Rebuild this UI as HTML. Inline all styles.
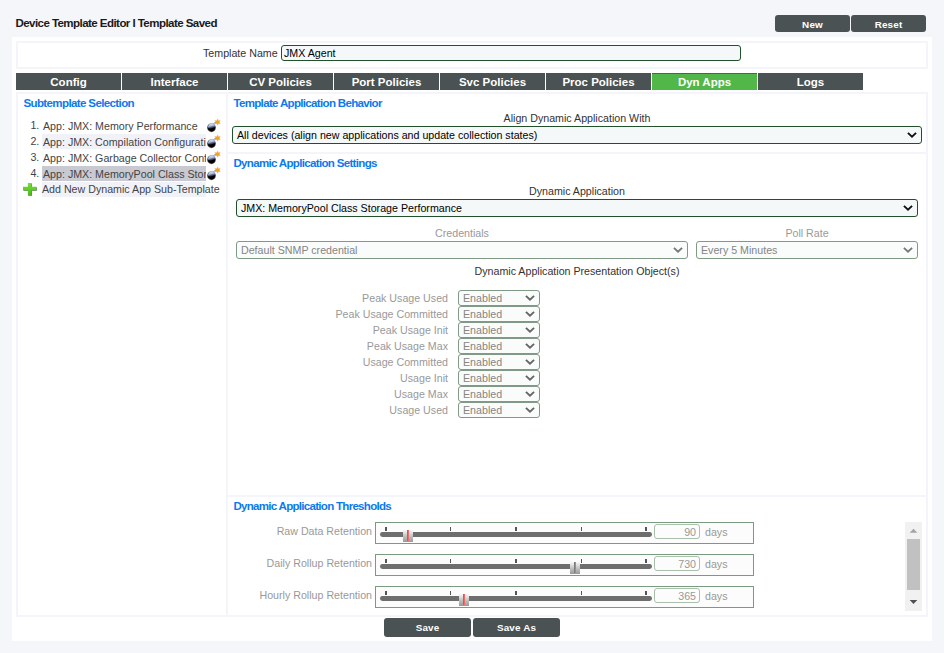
<!DOCTYPE html>
<html><head><meta charset="utf-8"><title>Device Template Editor</title>
<style>
*{box-sizing:border-box;margin:0;padding:0}
html,body{width:944px;height:653px;overflow:hidden}
body{background:#f5f6fa;font-family:"Liberation Sans",Arial,sans-serif;font-size:10.67px;color:#333;position:relative}
.abs{position:absolute}
#title{left:15.4px;top:16px;font-weight:bold;font-size:11.56px;letter-spacing:-0.565px;color:#1a1a1a;white-space:nowrap;line-height:14px}
.btn{background:#4b5253;color:#fff;font-weight:bold;font-size:9.9px;letter-spacing:0.15px;text-align:center;border-radius:3px;height:17px;line-height:20px}
#panel{left:12px;top:37px;width:920px;height:604px;background:#fff}
.box{border:2px solid #f4f5fa;background:#fff}
.tab{top:73px;height:17px;background:#4b5253;color:#fff;font-weight:bold;font-size:11.5px;text-align:center;line-height:18px}
.tab.on{background:#50b748;box-shadow:inset 0 1px 0 #5d5a5c}
.hd{color:#0b79ef;font-weight:bold;font-size:11.56px;letter-spacing:-0.63px;white-space:nowrap;line-height:14px}
.lbl{color:#333;white-space:nowrap;line-height:13px}
.c{text-align:center}
.r{text-align:right}
.g{color:#999}
.sel{border:1px solid #22502a;border-radius:3px;background:#f5f8f8;color:#000;white-space:nowrap;overflow:hidden;padding-left:4px}
.sel.dis{border-color:#809a86;color:#858585;background:#fafcfb}
.sel svg{position:absolute;right:4px}
.li{left:42px;width:164px;height:15px;line-height:17px;padding-left:1px;color:#444;white-space:nowrap;overflow:hidden}
.num{left:21.3px;width:18px;text-align:right;color:#444;line-height:14.5px}
.thr{left:375px;width:379px;height:22px;border:1px solid #7b9a80;background:#fbfcfb}
.track{left:380.3px;width:271.3px;height:4.8px;border-radius:2.4px;background:#6e6e6e}
.tk{width:2px;height:3.8px;background:#555}
.tk.l{width:1px;background:#555}
.thumb{width:10px;height:12.6px;background:linear-gradient(180deg,#ffffff 0%,#e6e6e6 25%,#bdbdbd 60%,#9a9a9a 100%)}
.thumb i{position:absolute;left:4px;top:1.2px;width:0.9px;height:10.8px;background:#7c7c7c}
.thumb b{position:absolute;left:4.8px;top:1.2px;width:1.4px;height:10.8px;background:#f56a68}
.num2{left:654px;width:46px;height:15px;border:1px solid #a9c0ac;border-radius:3px;background:#fbfcfb;color:#999;text-align:right;padding-right:3px;line-height:15px;font-size:10.67px}
</style></head><body>
<div class="abs" id="title">Device Template Editor I Template Saved</div>
<div class="abs btn" style="left:775px;top:15px;width:75px">New</div>
<div class="abs btn" style="left:851px;top:15px;width:75px">Reset</div>
<div class="abs" id="panel"></div>
<div class="abs box" style="left:16px;top:41px;width:912px;height:28px"></div>
<div class="abs lbl" style="left:203px;top:47px">Template Name</div>
<div class="abs sel" style="left:281px;top:45px;width:460px;height:16px;line-height:14px;padding-left:2px">JMX Agent</div>
<div class="abs tab" style="left:16px;width:105px">Config</div>
<div class="abs tab" style="left:122px;width:105px">Interface</div>
<div class="abs tab" style="left:228px;width:105px">CV Policies</div>
<div class="abs tab" style="left:334px;width:105px">Port Policies</div>
<div class="abs tab" style="left:440px;width:105px">Svc Policies</div>
<div class="abs tab" style="left:546px;width:105px">Proc Policies</div>
<div class="abs tab on" style="left:652px;width:105px">Dyn Apps</div>
<div class="abs tab" style="left:758px;width:105px">Logs</div>
<div class="abs box" style="left:16px;top:92px;width:212px;height:525px"></div>
<div class="abs box" style="left:226px;top:92px;width:702px;height:62px"></div>
<div class="abs box" style="left:226px;top:152px;width:702px;height:345px"></div>
<div class="abs box" style="left:226px;top:495px;width:702px;height:122px"></div>
<div class="abs hd" style="left:23.4px;top:96px">Subtemplate Selection</div>
<div class="abs hd" style="left:233.4px;top:96px;letter-spacing:-0.68px">Template Application Behavior</div>
<div class="abs hd" style="left:233.4px;top:156px;letter-spacing:-0.685px">Dynamic Application Settings</div>
<div class="abs hd" style="left:233.4px;top:499px;letter-spacing:-0.72px">Dynamic Application Thresholds</div>
<div class="abs num" style="top:117.7px">1.</div>
<div class="abs li" style="top:118px;background:transparent">App: JMX: Memory Performance</div>
<svg class="abs" style="left:204px;top:117.9px" width="20" height="16" viewBox="0 0 20 16"><defs><radialGradient id="bg0" cx="0.5" cy="0.5" r="0.5"><stop offset="0.72" stop-color="#000"/><stop offset="1" stop-color="#000" stop-opacity="0.5"/></radialGradient><linearGradient id="bh0" x1="0.25" y1="0" x2="0.6" y2="1"><stop offset="0" stop-color="#eef3fd"/><stop offset="0.5" stop-color="#9db0d8"/><stop offset="1" stop-color="#46527a" stop-opacity="0.3"/></linearGradient></defs><path d="M9.4 6 L10.6 4.9 L12.4 4.6" stroke="#666" stroke-width="0.9" fill="none"/><circle cx="7.5" cy="9.7" r="4.45" fill="url(#bg0)"/><path d="M4.1 9.9 C3.7 7.3 5.6 5.6 7.7 5.6 C9.8 5.6 11.3 7 11.3 8.9 C9.5 10 6.4 11.2 4.1 9.9Z" fill="url(#bh0)"/><g transform="translate(13.6 4.1) scale(0.9) translate(-13.6 -3.9)"><path d="M13.6 0.6 L14.4 2.6 L16.4 2.2 L15.3 3.9 L16.5 5.5 L14.4 5.3 L13.6 7.3 L12.8 5.3 L10.7 5.6 L11.9 3.9 L10.7 2.2 L12.8 2.6 Z" fill="#f6a21c" stroke="#f6a21c" stroke-width="0.5" stroke-linejoin="round"/><circle cx="13.6" cy="3.9" r="1.9" fill="#f5a520"/><circle cx="13.6" cy="4" r="0.6" fill="#bfae45"/></g></svg>
<div class="abs num" style="top:133.7px">2.</div>
<div class="abs li" style="top:134px;background:#f1f2f8">App: JMX: Compilation Configuration</div>
<svg class="abs" style="left:204px;top:133.9px" width="20" height="16" viewBox="0 0 20 16"><defs><radialGradient id="bg1" cx="0.5" cy="0.5" r="0.5"><stop offset="0.72" stop-color="#000"/><stop offset="1" stop-color="#000" stop-opacity="0.5"/></radialGradient><linearGradient id="bh1" x1="0.25" y1="0" x2="0.6" y2="1"><stop offset="0" stop-color="#eef3fd"/><stop offset="0.5" stop-color="#9db0d8"/><stop offset="1" stop-color="#46527a" stop-opacity="0.3"/></linearGradient></defs><path d="M9.4 6 L10.6 4.9 L12.4 4.6" stroke="#666" stroke-width="0.9" fill="none"/><circle cx="7.5" cy="9.7" r="4.45" fill="url(#bg1)"/><path d="M4.1 9.9 C3.7 7.3 5.6 5.6 7.7 5.6 C9.8 5.6 11.3 7 11.3 8.9 C9.5 10 6.4 11.2 4.1 9.9Z" fill="url(#bh1)"/><g transform="translate(13.6 4.1) scale(0.9) translate(-13.6 -3.9)"><path d="M13.6 0.6 L14.4 2.6 L16.4 2.2 L15.3 3.9 L16.5 5.5 L14.4 5.3 L13.6 7.3 L12.8 5.3 L10.7 5.6 L11.9 3.9 L10.7 2.2 L12.8 2.6 Z" fill="#f6a21c" stroke="#f6a21c" stroke-width="0.5" stroke-linejoin="round"/><circle cx="13.6" cy="3.9" r="1.9" fill="#f5a520"/><circle cx="13.6" cy="4" r="0.6" fill="#bfae45"/></g></svg>
<div class="abs num" style="top:149.7px">3.</div>
<div class="abs li" style="top:150px;background:transparent">App: JMX: Garbage Collector Configuration</div>
<svg class="abs" style="left:204px;top:149.9px" width="20" height="16" viewBox="0 0 20 16"><defs><radialGradient id="bg2" cx="0.5" cy="0.5" r="0.5"><stop offset="0.72" stop-color="#000"/><stop offset="1" stop-color="#000" stop-opacity="0.5"/></radialGradient><linearGradient id="bh2" x1="0.25" y1="0" x2="0.6" y2="1"><stop offset="0" stop-color="#eef3fd"/><stop offset="0.5" stop-color="#9db0d8"/><stop offset="1" stop-color="#46527a" stop-opacity="0.3"/></linearGradient></defs><path d="M9.4 6 L10.6 4.9 L12.4 4.6" stroke="#666" stroke-width="0.9" fill="none"/><circle cx="7.5" cy="9.7" r="4.45" fill="url(#bg2)"/><path d="M4.1 9.9 C3.7 7.3 5.6 5.6 7.7 5.6 C9.8 5.6 11.3 7 11.3 8.9 C9.5 10 6.4 11.2 4.1 9.9Z" fill="url(#bh2)"/><g transform="translate(13.6 4.1) scale(0.9) translate(-13.6 -3.9)"><path d="M13.6 0.6 L14.4 2.6 L16.4 2.2 L15.3 3.9 L16.5 5.5 L14.4 5.3 L13.6 7.3 L12.8 5.3 L10.7 5.6 L11.9 3.9 L10.7 2.2 L12.8 2.6 Z" fill="#f6a21c" stroke="#f6a21c" stroke-width="0.5" stroke-linejoin="round"/><circle cx="13.6" cy="3.9" r="1.9" fill="#f5a520"/><circle cx="13.6" cy="4" r="0.6" fill="#bfae45"/></g></svg>
<div class="abs num" style="top:165.7px">4.</div>
<div class="abs li" style="top:166px;background:#c9c9d1">App: JMX: MemoryPool Class Storage Performance</div>
<svg class="abs" style="left:204px;top:165.9px" width="20" height="16" viewBox="0 0 20 16"><defs><radialGradient id="bg3" cx="0.5" cy="0.5" r="0.5"><stop offset="0.72" stop-color="#000"/><stop offset="1" stop-color="#000" stop-opacity="0.5"/></radialGradient><linearGradient id="bh3" x1="0.25" y1="0" x2="0.6" y2="1"><stop offset="0" stop-color="#eef3fd"/><stop offset="0.5" stop-color="#9db0d8"/><stop offset="1" stop-color="#46527a" stop-opacity="0.3"/></linearGradient></defs><path d="M9.4 6 L10.6 4.9 L12.4 4.6" stroke="#666" stroke-width="0.9" fill="none"/><circle cx="7.5" cy="9.7" r="4.45" fill="url(#bg3)"/><path d="M4.1 9.9 C3.7 7.3 5.6 5.6 7.7 5.6 C9.8 5.6 11.3 7 11.3 8.9 C9.5 10 6.4 11.2 4.1 9.9Z" fill="url(#bh3)"/><g transform="translate(13.6 4.1) scale(0.9) translate(-13.6 -3.9)"><path d="M13.6 0.6 L14.4 2.6 L16.4 2.2 L15.3 3.9 L16.5 5.5 L14.4 5.3 L13.6 7.3 L12.8 5.3 L10.7 5.6 L11.9 3.9 L10.7 2.2 L12.8 2.6 Z" fill="#f6a21c" stroke="#f6a21c" stroke-width="0.5" stroke-linejoin="round"/><circle cx="13.6" cy="3.9" r="1.9" fill="#f5a520"/><circle cx="13.6" cy="4" r="0.6" fill="#bfae45"/></g></svg>
<div class="abs li" style="top:182px;height:15px;line-height:15.8px;background:#f1f2f8;padding-left:0;overflow:visible">Add New Dynamic App Sub-Template</div>
<svg class="abs" style="left:21px;top:181px" width="18" height="17" viewBox="0 0 18 17"><defs><linearGradient id="pg" x1="0" y1="0" x2="0" y2="1"><stop offset="0" stop-color="#7ad94a"/><stop offset="0.5" stop-color="#5fd026"/><stop offset="1" stop-color="#4db51c"/></linearGradient></defs><path d="M7.3 2.6h3.7v3.7h4.8v3.4h-4.8v5h-3.7v-5h-4.8v-3.4h4.8z" fill="#2c3a24" opacity="0.75"/><path d="M6.9 2h3.7v3.8h4.8v3.4h-4.8v5.1h-3.7v-5.1h-4.9v-3.4h4.9z" fill="url(#pg)"/></svg>
<div class="abs lbl c" style="left:427px;width:300px;top:112px">Align Dynamic Application With</div>
<div class="abs sel" style="left:232px;top:126px;width:690px;height:18px;line-height:16px">All devices (align new applications and update collection states)<svg style="top:5px" width="10" height="6" viewBox="0 0 10 6"><path d="M0.9 0.9 L5 4.7 L9.1 0.9" fill="none" stroke="#111" stroke-width="1.9" stroke-linecap="butt" stroke-linejoin="miter"/></svg></div>
<div class="abs lbl c" style="left:427px;width:300px;top:185px">Dynamic Application</div>
<div class="abs sel" style="left:236px;top:199px;width:682px;height:18px;line-height:16px">JMX: MemoryPool Class Storage Performance<svg style="top:5px" width="10" height="6" viewBox="0 0 10 6"><path d="M0.9 0.9 L5 4.7 L9.1 0.9" fill="none" stroke="#111" stroke-width="1.9" stroke-linecap="butt" stroke-linejoin="miter"/></svg></div>
<div class="abs lbl c g" style="left:362px;width:200px;top:227px">Credentials</div>
<div class="abs sel dis" style="left:236px;top:241px;width:452px;height:18px;line-height:16px">Default SNMP credential<svg style="top:5px" width="10" height="6" viewBox="0 0 10 6"><path d="M0.9 0.9 L5 4.7 L9.1 0.9" fill="none" stroke="#777" stroke-width="1.9" stroke-linecap="butt" stroke-linejoin="miter"/></svg></div>
<div class="abs lbl c g" style="left:707px;width:200px;top:227px">Poll Rate</div>
<div class="abs sel dis" style="left:696px;top:241px;width:222px;height:18px;line-height:16px">Every 5 Minutes<svg style="top:5px" width="10" height="6" viewBox="0 0 10 6"><path d="M0.9 0.9 L5 4.7 L9.1 0.9" fill="none" stroke="#777" stroke-width="1.9" stroke-linecap="butt" stroke-linejoin="miter"/></svg></div>
<div class="abs lbl c" style="left:427px;width:300px;top:265px">Dynamic Application Presentation Object(s)</div>
<div class="abs lbl r g" style="left:248px;width:200px;top:292px">Peak Usage Used</div>
<div class="abs sel dis" style="left:458px;top:290px;width:82px;height:16px;line-height:14px">Enabled<svg style="top:4px" width="10" height="6" viewBox="0 0 10 6"><path d="M0.9 0.9 L5 4.7 L9.1 0.9" fill="none" stroke="#666" stroke-width="1.9" stroke-linecap="butt" stroke-linejoin="miter"/></svg></div>
<div class="abs lbl r g" style="left:248px;width:200px;top:308px">Peak Usage Committed</div>
<div class="abs sel dis" style="left:458px;top:306px;width:82px;height:16px;line-height:14px">Enabled<svg style="top:4px" width="10" height="6" viewBox="0 0 10 6"><path d="M0.9 0.9 L5 4.7 L9.1 0.9" fill="none" stroke="#666" stroke-width="1.9" stroke-linecap="butt" stroke-linejoin="miter"/></svg></div>
<div class="abs lbl r g" style="left:248px;width:200px;top:324px">Peak Usage Init</div>
<div class="abs sel dis" style="left:458px;top:322px;width:82px;height:16px;line-height:14px">Enabled<svg style="top:4px" width="10" height="6" viewBox="0 0 10 6"><path d="M0.9 0.9 L5 4.7 L9.1 0.9" fill="none" stroke="#666" stroke-width="1.9" stroke-linecap="butt" stroke-linejoin="miter"/></svg></div>
<div class="abs lbl r g" style="left:248px;width:200px;top:340px">Peak Usage Max</div>
<div class="abs sel dis" style="left:458px;top:338px;width:82px;height:16px;line-height:14px">Enabled<svg style="top:4px" width="10" height="6" viewBox="0 0 10 6"><path d="M0.9 0.9 L5 4.7 L9.1 0.9" fill="none" stroke="#666" stroke-width="1.9" stroke-linecap="butt" stroke-linejoin="miter"/></svg></div>
<div class="abs lbl r g" style="left:248px;width:200px;top:356px">Usage Committed</div>
<div class="abs sel dis" style="left:458px;top:354px;width:82px;height:16px;line-height:14px">Enabled<svg style="top:4px" width="10" height="6" viewBox="0 0 10 6"><path d="M0.9 0.9 L5 4.7 L9.1 0.9" fill="none" stroke="#666" stroke-width="1.9" stroke-linecap="butt" stroke-linejoin="miter"/></svg></div>
<div class="abs lbl r g" style="left:248px;width:200px;top:372px">Usage Init</div>
<div class="abs sel dis" style="left:458px;top:370px;width:82px;height:16px;line-height:14px">Enabled<svg style="top:4px" width="10" height="6" viewBox="0 0 10 6"><path d="M0.9 0.9 L5 4.7 L9.1 0.9" fill="none" stroke="#666" stroke-width="1.9" stroke-linecap="butt" stroke-linejoin="miter"/></svg></div>
<div class="abs lbl r g" style="left:248px;width:200px;top:388px">Usage Max</div>
<div class="abs sel dis" style="left:458px;top:386px;width:82px;height:16px;line-height:14px">Enabled<svg style="top:4px" width="10" height="6" viewBox="0 0 10 6"><path d="M0.9 0.9 L5 4.7 L9.1 0.9" fill="none" stroke="#666" stroke-width="1.9" stroke-linecap="butt" stroke-linejoin="miter"/></svg></div>
<div class="abs lbl r g" style="left:248px;width:200px;top:404px">Usage Used</div>
<div class="abs sel dis" style="left:458px;top:402px;width:82px;height:16px;line-height:14px">Enabled<svg style="top:4px" width="10" height="6" viewBox="0 0 10 6"><path d="M0.9 0.9 L5 4.7 L9.1 0.9" fill="none" stroke="#666" stroke-width="1.9" stroke-linecap="butt" stroke-linejoin="miter"/></svg></div>
<div class="abs lbl r g" style="left:172px;width:200px;top:525px;font-size:10.67px">Raw Data Retention</div>
<div class="abs thr" style="top:522px"></div>
<div class="abs track" style="top:532px"></div>
<div class="abs tk" style="left:385px;top:527px"></div>
<div class="abs tk l" style="left:450px;top:527px"></div>
<div class="abs tk" style="left:515px;top:527px"></div>
<div class="abs tk l" style="left:581px;top:527px"></div>
<div class="abs tk" style="left:645px;top:527px"></div>
<div class="abs thumb" style="left:403px;top:529.2px"><i></i><b></b></div>
<div class="abs num2" style="top:524px">90</div>
<div class="abs lbl g" style="left:705px;top:526px">days</div>
<div class="abs lbl r g" style="left:172px;width:200px;top:557px;font-size:10.67px">Daily Rollup Retention</div>
<div class="abs thr" style="top:554px"></div>
<div class="abs track" style="top:564px"></div>
<div class="abs tk" style="left:385px;top:559px"></div>
<div class="abs tk l" style="left:450px;top:559px"></div>
<div class="abs tk" style="left:515px;top:559px"></div>
<div class="abs tk l" style="left:581px;top:559px"></div>
<div class="abs tk" style="left:645px;top:559px"></div>
<div class="abs thumb" style="left:570px;top:561.2px"><i></i><b></b></div>
<div class="abs num2" style="top:556px">730</div>
<div class="abs lbl g" style="left:705px;top:558px">days</div>
<div class="abs lbl r g" style="left:172px;width:200px;top:589px;font-size:10.67px">Hourly Rollup Retention</div>
<div class="abs thr" style="top:586px"></div>
<div class="abs track" style="top:596px"></div>
<div class="abs tk" style="left:385px;top:591px"></div>
<div class="abs tk l" style="left:450px;top:591px"></div>
<div class="abs tk" style="left:515px;top:591px"></div>
<div class="abs tk l" style="left:581px;top:591px"></div>
<div class="abs tk" style="left:645px;top:591px"></div>
<div class="abs thumb" style="left:459px;top:593.2px"><i></i><b></b></div>
<div class="abs num2" style="top:588px">365</div>
<div class="abs lbl g" style="left:705px;top:590px">days</div>
<div class="abs" style="left:905px;top:522px;width:17px;height:89px;background:#f1f1f1"></div>
<div class="abs" style="left:907px;top:539px;width:13px;height:51px;background:#c1c1c1"></div>
<svg class="abs" style="left:905px;top:522px" width="17" height="89" viewBox="0 0 17 89"><path d="M4.7 10.7 L8.5 6.7 L12.3 10.7Z" fill="#a3a3a3"/><path d="M4.7 78 L8.5 82 L12.3 78Z" fill="#505050"/></svg>
<div class="abs btn" style="left:384px;top:618px;width:87px;height:19px;line-height:20px">Save</div>
<div class="abs btn" style="left:473px;top:618px;width:87px;height:19px;line-height:20px">Save As</div>
</body></html>
